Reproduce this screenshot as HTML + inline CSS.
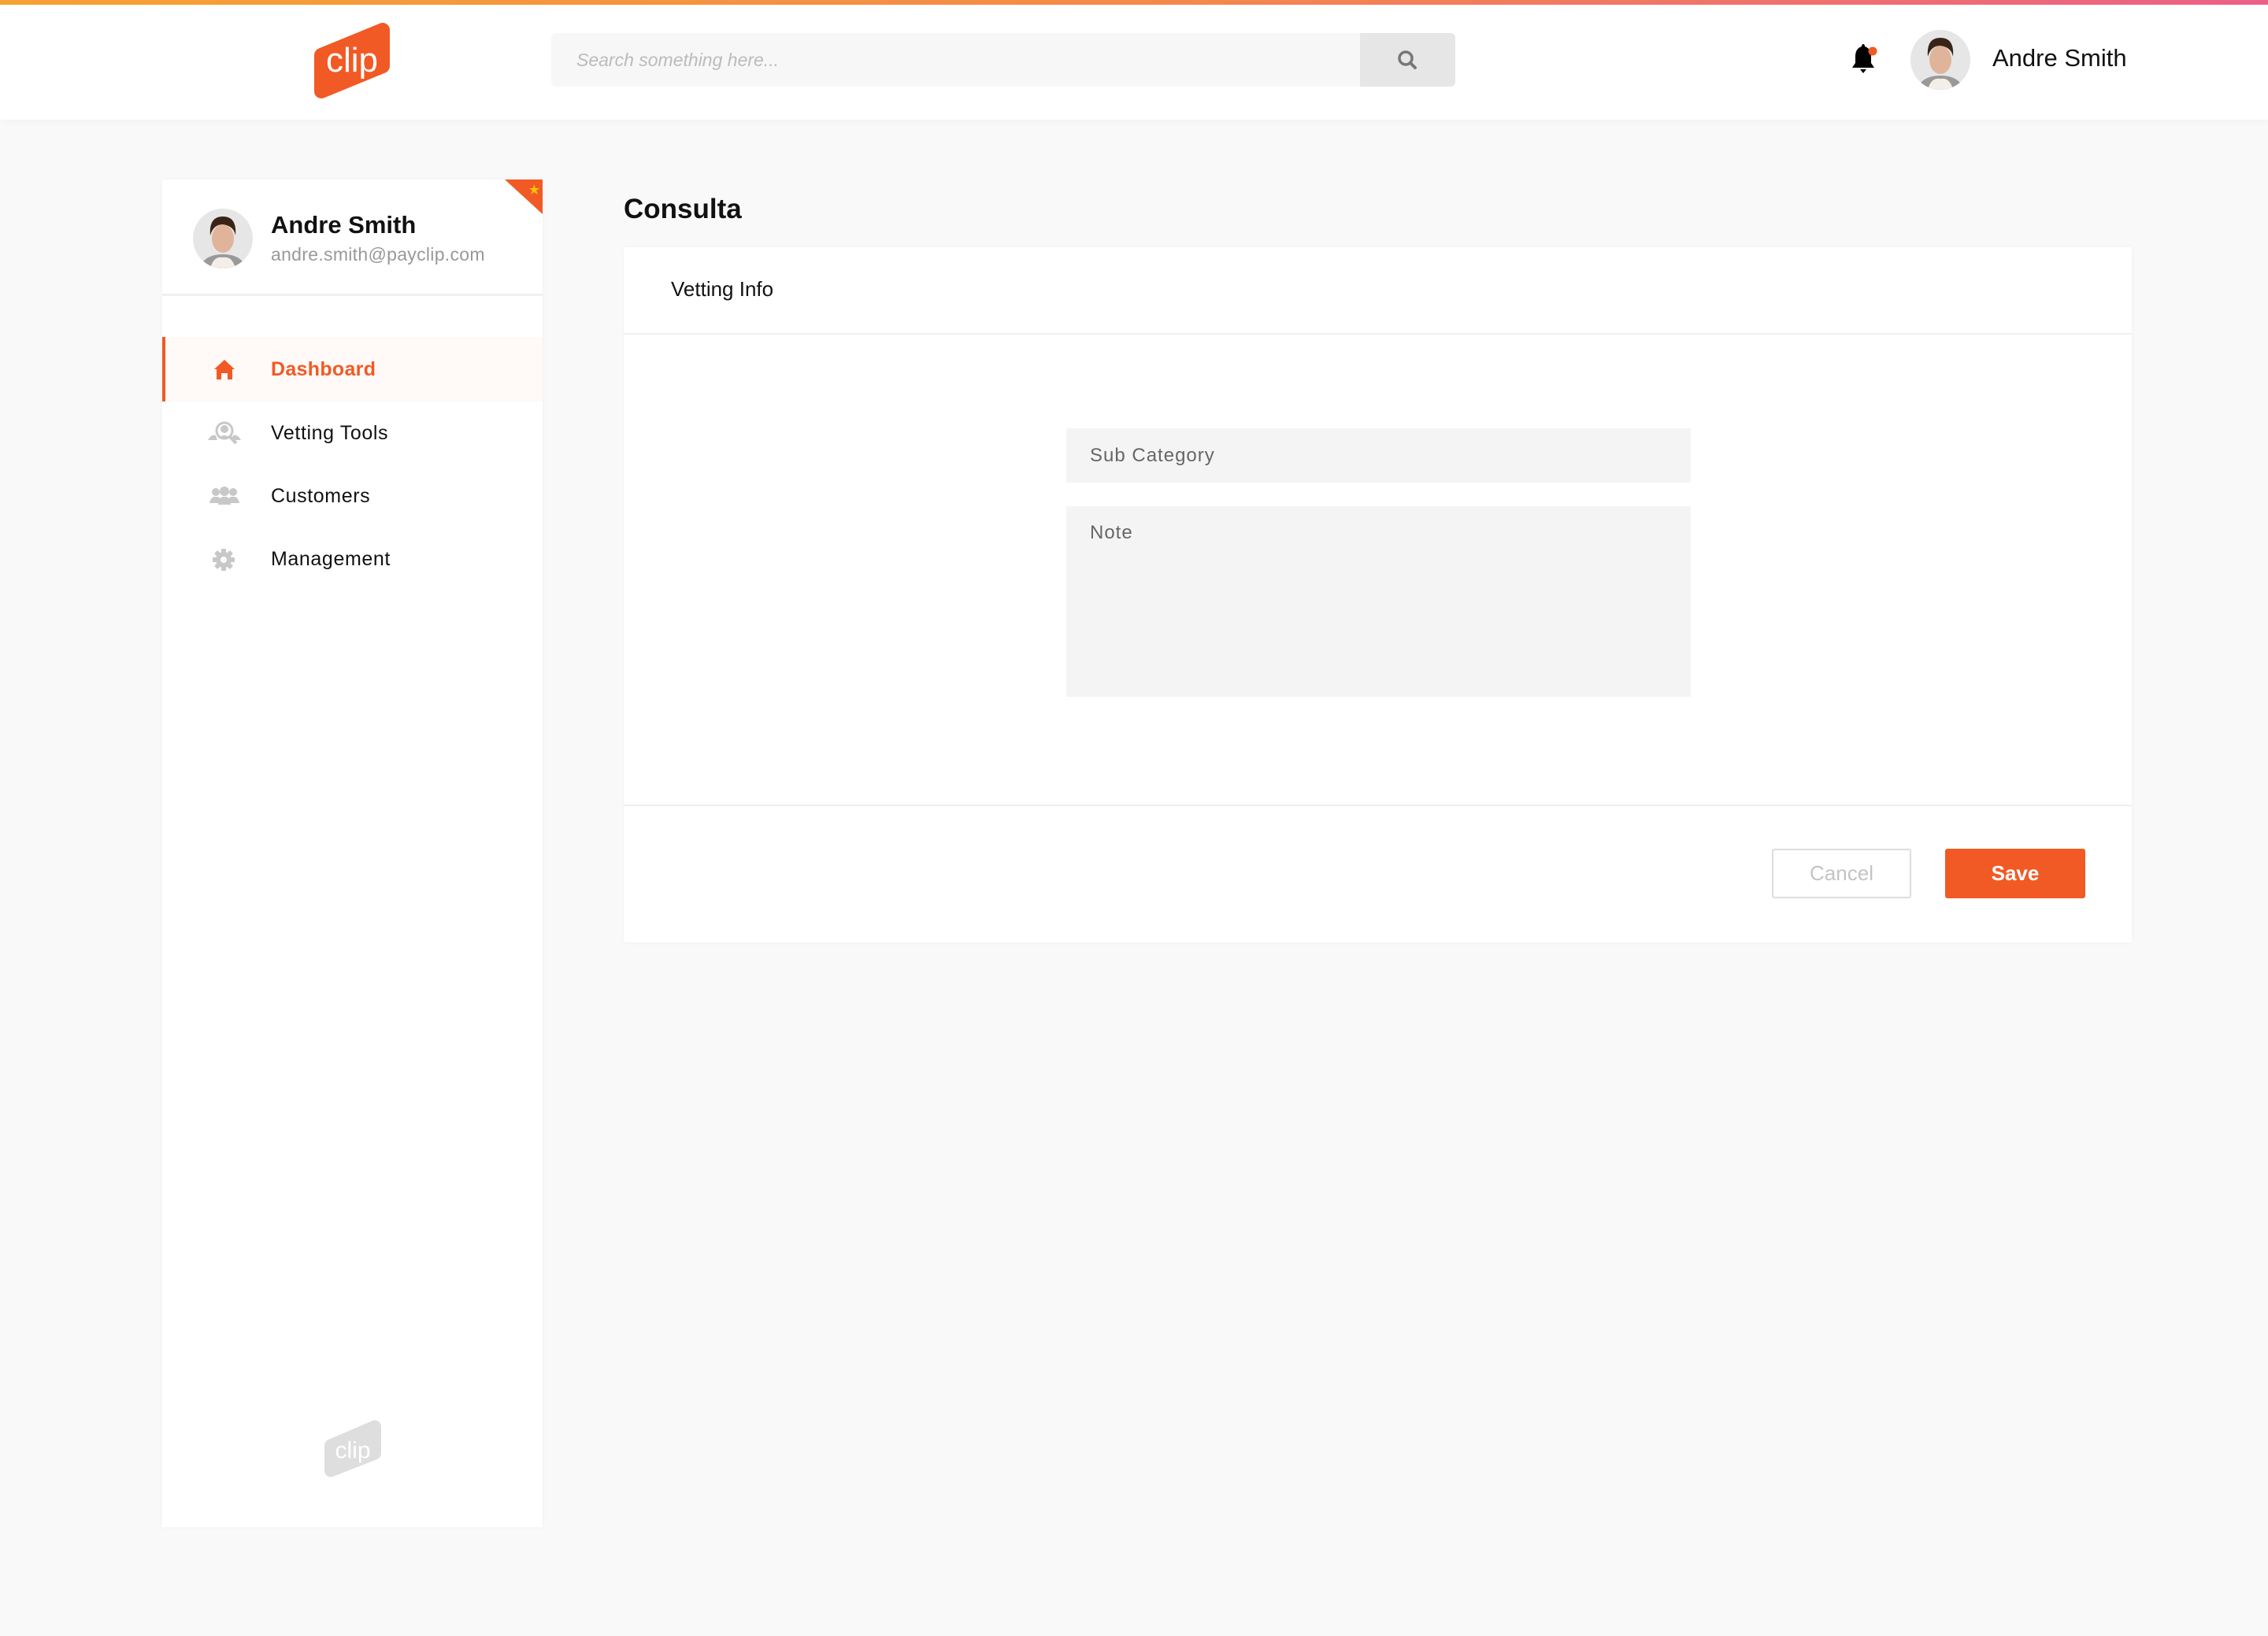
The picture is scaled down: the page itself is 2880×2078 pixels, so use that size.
<!DOCTYPE html>
<html><head><meta charset="utf-8"><style>
*{box-sizing:border-box;margin:0;padding:0}
body{width:2880px;height:2078px;background:#f9f9f9;font-family:"Liberation Sans",sans-serif;position:relative;overflow:hidden}
.abs{position:absolute}
.topbar{left:0;top:0;width:2880px;height:6px;background:linear-gradient(90deg,#f7a234,#f58a4a 50%,#ec6088)}
.header{left:0;top:6px;width:2880px;height:146px;background:#fff;box-shadow:0 2px 8px rgba(0,0,0,.03)}
.search{left:700px;top:42px;width:1027px;height:68px;background:#f7f7f7;border-radius:6px 0 0 6px;color:#bbb;font-style:italic;font-size:23px;line-height:68px;padding-left:32px}
.sbtn{left:1727px;top:42px;width:121px;height:68px;background:#e6e6e6;border-radius:0 6px 6px 0}
.side{left:206px;top:228px;width:483px;height:1712px;background:#fff;box-shadow:0 0 6px rgba(0,0,0,.04)}
.nav{position:absolute;left:0;width:483px;height:82px;font-size:25px;letter-spacing:0.6px;line-height:82px;color:#111}
.nav span{position:absolute;left:138px}
.card{left:792px;top:314px;width:1915px;height:883px;background:#fff;box-shadow:0 0 6px rgba(0,0,0,.04)}
.field{background:#f4f4f4;color:#666;font-size:24px;letter-spacing:1px;padding-left:30px}
</style></head><body>
<div class="abs topbar"></div>
<div class="abs header"></div>
<svg class="abs" style="left:398px;top:28px" width="98" height="98" viewBox="0 0 98 98">
<path d="M10,42 L88,10 L88,56 L10,88 Z" fill="#f15a24" stroke="#f15a24" stroke-width="18" stroke-linejoin="round"/>
<text x="49" y="63" text-anchor="middle" font-family="Liberation Sans" font-size="44" fill="#fff" font-weight="300">clip</text>
</svg>
<div class="abs search">Search something here...</div>
<div class="abs sbtn"><svg width="121" height="68"><circle cx="58" cy="32" r="8" fill="none" stroke="#777" stroke-width="3.5"/><line x1="64" y1="38" x2="70" y2="44" stroke="#777" stroke-width="4" stroke-linecap="round"/></svg></div>
<svg class="abs" style="left:2344px;top:52px" width="44" height="46" viewBox="0 0 44 46">
<path d="M22,4 C23,4 24,5 24,7 C30,9 32,14 32,20 L32,28 L36,34 L8,34 L12,28 L12,20 C12,14 14,9 20,7 C20,5 21,4 22,4 Z" fill="#000"/><path d="M18,36 L26,36 L22,41 Z" fill="#000"/><circle cx="34" cy="13" r="5.5" fill="#f15a24"/></svg>
<svg class="abs" style="left:2426px;top:38px" width="76" height="76" viewBox="0 0 76 76"><clipPath id="c1"><circle cx="38" cy="38" r="38"/></clipPath><g clip-path="url(#c1)"><rect width="76" height="76" fill="#e6e6e6"/><path d="M8,76 Q14,58 38,58 Q62,58 68,76Z" fill="#999"/><path d="M22,76 Q26,60 38,62 Q50,60 54,76Z" fill="#f4eee8"/><ellipse cx="38" cy="38" rx="14" ry="18" fill="#e0b49a"/><path d="M22,34 Q20,10 38,10 Q56,10 54,34 Q52,22 38,20 Q26,20 22,34Z" fill="#3a2418"/></g></svg>
<div class="abs" style="left:2530px;top:56px;font-size:31px;color:#111">Andre Smith</div>

<div class="abs side">
<svg class="abs" style="left:435px;top:0" width="48" height="44"><path d="M0,0 L48,0 L48,44 Z" fill="#f15a24"/><path d="M37,6 L39,11 L44,11 L40,14 L42,19 L37,16 L33,19 L35,14 L31,11 L36,11Z" fill="#ffc107"/></svg>
<svg class="abs" style="left:39px;top:37px" width="76" height="76" viewBox="0 0 76 76"><clipPath id="c2"><circle cx="38" cy="38" r="38"/></clipPath><g clip-path="url(#c2)"><rect width="76" height="76" fill="#e6e6e6"/><path d="M8,76 Q14,58 38,58 Q62,58 68,76Z" fill="#999"/><path d="M22,76 Q26,60 38,62 Q50,60 54,76Z" fill="#f4eee8"/><ellipse cx="38" cy="38" rx="14" ry="18" fill="#e0b49a"/><path d="M22,34 Q20,10 38,10 Q56,10 54,34 Q52,22 38,20 Q26,20 22,34Z" fill="#3a2418"/></g></svg>
<div class="abs" style="left:138px;top:40px;font-size:31px;font-weight:bold;color:#111">Andre Smith</div>
<div class="abs" style="left:138px;top:82px;font-size:23px;color:#999;letter-spacing:0.3px">andre.smith@payclip.com</div>
<div class="abs" style="left:0;top:145px;width:483px;height:3px;background:#f0f0f0"></div>
<div class="nav" style="top:200px;background:#fff9f7;border-left:4px solid #f15a24;color:#f15a24;font-weight:bold;letter-spacing:0.3px"><svg class="abs" style="left:60px;top:27px" width="30" height="28" viewBox="0 0 30 28"><path d="M15,2 L28,14 L25,14 L25,27 L19,27 L19,19 L11,19 L11,27 L5,27 L5,14 L2,14 Z" fill="#f15a24"/></svg><span style="left:134px">Dashboard</span></div>
<div class="nav" style="top:281px"><svg class="abs" style="left:58px;top:26px" width="42" height="30" viewBox="0 0 42 30"><circle cx="21" cy="12" r="10" fill="none" stroke="#c8c8c8" stroke-width="3"/><circle cx="21" cy="10" r="5" fill="#c8c8c8"/><path d="M13,22 Q21,14 29,22Z" fill="#c8c8c8"/><path d="M0,24 Q4,16 10,18 L12,24Z M42,24 Q38,16 32,18 L30,24Z" fill="#c8c8c8"/><line x1="28" y1="20" x2="36" y2="28" stroke="#c8c8c8" stroke-width="4"/></svg><span>Vetting Tools</span></div>
<div class="nav" style="top:361px"><svg class="abs" style="left:60px;top:28px" width="38" height="26" viewBox="0 0 38 26"><circle cx="8" cy="8" r="5" fill="#c8c8c8"/><circle cx="19" cy="7" r="6" fill="#c8c8c8"/><circle cx="30" cy="8" r="5" fill="#c8c8c8"/><path d="M0,22 Q2,13 8,14 Q14,13 16,22Z M11,24 Q12,13 19,14 Q26,13 27,24Z M22,22 Q24,13 30,14 Q36,13 38,22Z" fill="#c8c8c8"/></svg><span>Customers</span></div>
<div class="nav" style="top:441px"><svg class="abs" style="left:63px;top:27px" width="30" height="30" viewBox="0 0 30 30"><g fill="#c8c8c8"><circle cx="15" cy="15" r="10"/><rect x="12" y="1" width="6" height="28" rx="1"/><rect x="1" y="12" width="28" height="6" rx="1"/><rect x="12" y="1" width="6" height="28" rx="1" transform="rotate(45 15 15)"/><rect x="12" y="1" width="6" height="28" rx="1" transform="rotate(-45 15 15)"/></g><circle cx="15" cy="15" r="4" fill="#fff"/></svg><span>Management</span></div>
<svg class="abs" style="left:204px;top:1574px" width="76" height="76" viewBox="0 0 76 76"><path d="M10,34 L66,10 L66,44 L10,66 Z" fill="#dedede" stroke="#dedede" stroke-width="16" stroke-linejoin="round"/><text x="38" y="50" text-anchor="middle" font-family="Liberation Sans" font-size="30" fill="#fff">clip</text></svg>
</div>

<div class="abs" style="left:792px;top:246px;font-size:35px;font-weight:bold;color:#111">Consulta</div>
<div class="abs card">
<div class="abs" style="left:60px;top:38px;font-size:26px;color:#111">Vetting Info</div>
<div class="abs" style="left:0;top:109px;width:1915px;height:2px;background:#efefef"></div>
<div class="abs field" style="left:562px;top:230px;width:793px;height:69px;line-height:69px">Sub Category</div>
<div class="abs field" style="left:562px;top:329px;width:793px;height:242px;padding-top:20px">Note</div>
<div class="abs" style="left:0;top:708px;width:1915px;height:2px;background:#efefef"></div>
<div class="abs" style="left:1458px;top:764px;width:177px;height:63px;border:2px solid #ddd;border-radius:3px;color:#c4c4c4;font-size:26px;text-align:center;line-height:59px">Cancel</div>
<div class="abs" style="left:1678px;top:764px;width:178px;height:63px;background:#f15a24;border-radius:3px;color:#fff;font-size:26px;font-weight:bold;text-align:center;line-height:63px">Save</div>
</div>
</body></html>
